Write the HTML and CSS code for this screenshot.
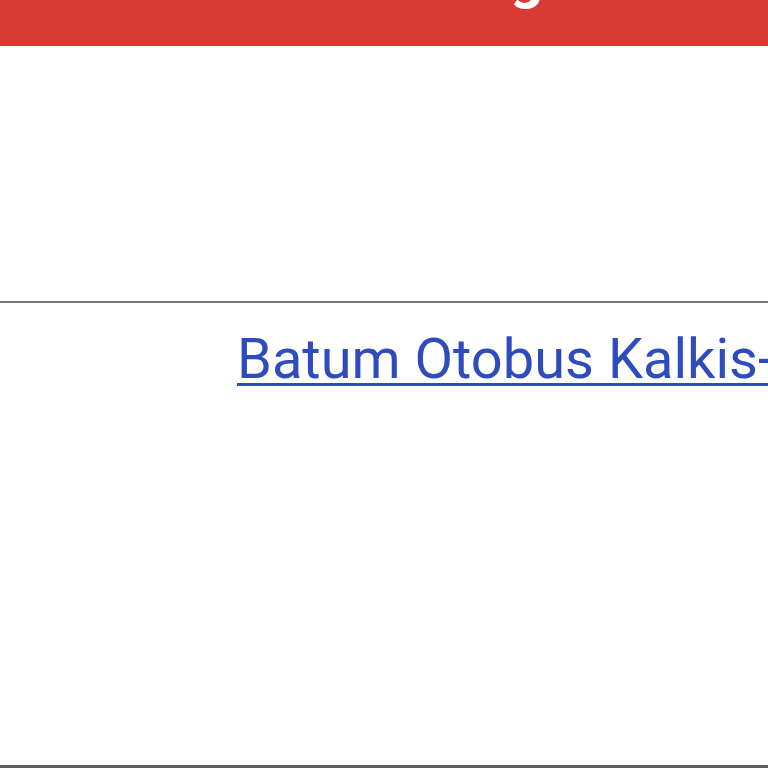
FILE: index.html
```html
<!DOCTYPE html>
<html>
<head>
<meta charset="utf-8">
<link rel="stylesheet" href="styles.css">
</head>
<body>
<div class="page">
  <header class="topbar"><span class="title">g</span></header>
  <div class="blank"></div>
  <div class="row">
    <a class="link" href="#">Batum Otobus Kalkis-Varis Saatleri</a>
  </div>
</div>
</body>
</html>
```
FILE: styles.css
```css
html, body {
  margin: 0;
  padding: 0;
  background: #ffffff;
  overflow: hidden;
  width: 768px;
  height: 768px;
}
.page {
  width: 768px;
  height: 768px;
  display: flex;
  flex-direction: column;
  font-family: Roboto, "Liberation Sans", sans-serif;
}
.topbar {
  height: 45px;
  flex: none;
  background: #d83a34;
  border-bottom: 1px solid #c9403a;
  overflow: hidden;
  display: flex;
}
.title {
  color: #ffffff;
  font-weight: 700;
  font-size: 58px;
  line-height: 58px;
  margin-top: -52px;
  padding-left: 510px;
}
.blank {
  height: 255px;
  flex: none;
  border-bottom: 2px solid #777777;
}
.row {
  flex: 1;
  padding-left: 237px;
  padding-top: 26px;
  white-space: nowrap;
  overflow: hidden;
  border-bottom: 3px solid #596165;
}
.link {
  color: #2f4cbf;
  font-size: 56px;
  line-height: 60px;
  text-decoration: underline;
  text-decoration-thickness: 3px;
  text-underline-offset: 5px;
}
```
